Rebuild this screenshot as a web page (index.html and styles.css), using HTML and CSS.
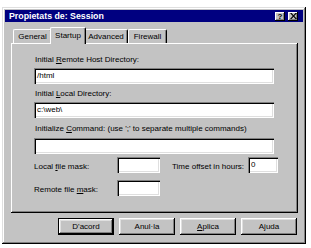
FILE: index.html
```html
<!DOCTYPE html>
<html>
<head>
<meta charset="utf-8">
<link rel="stylesheet" href="styles.css">
</head>
<body>
<div class="window">
  <div class="titlebar">
    <span class="title">Propietats de: Session</span>
    <div class="caption-buttons">
      <span class="cap-btn help">?</span>
      <span class="cap-btn close"><svg width="7" height="6" viewBox="0 0 7 6"><path d="M0 0h1.6L3.5 2.2 5.4 0H7L4.3 3 7 6H5.4L3.5 3.8 1.6 6H0l2.7-3z" fill="#000"/></svg></span>
    </div>
  </div>
  <div class="content">
    <div class="tabs">
      <div class="tab tab-general">General</div>
      <div class="tab tab-startup active">Startup</div>
      <div class="tab tab-advanced">Advanced</div>
      <div class="tab tab-firewall">Firewall</div>
    </div>
    <div class="panel">
      <div class="label">Initial <u>R</u>emote Host Directory:</div>
      <div class="input wide first">/html</div>
      <div class="label gap5">Initial <u>L</u>ocal Directory:</div>
      <div class="input wide first">c:\web\</div>
      <div class="label gap6">Initialize <u>C</u>ommand: (use ';' to separate multiple commands)</div>
      <div class="input wide second"></div>
      <div class="row row4">
        <span class="row-label">Local <u>f</u>ile mask:</span>
        <div class="input mask"></div>
        <span class="row-label time">Time offset in hours:</span>
        <div class="input offset">0</div>
      </div>
      <div class="row row5">
        <span class="row-label">Remote file <u>m</u>ask:</span>
        <div class="input mask"></div>
      </div>
    </div>
    <div class="buttons">
      <div class="btn default">D'acord</div>
      <div class="btn">Anul·la</div>
      <div class="btn"><u>A</u>plica</div>
      <div class="btn">Ajuda</div>
    </div>
  </div>
</div>
</body>
</html>
```
FILE: styles.css
```css
html, body {
  margin: 0;
  padding: 0;
  background: #ffffff;
}
body {
  font-family: "Liberation Sans", Arial, sans-serif;
  font-size: 8px;
  color: #000;
}
u { text-decoration: underline; text-underline-offset: 1px; }

.window {
  margin: 7px 0 0 2px;
  width: 304px;
  height: 237px;
  box-sizing: border-box;
  padding: 3px;
  background: #c3c3c3;
  box-shadow: inset -1px -1px #000, inset 1px 1px #dfdfdf, inset -2px -2px #808080, inset 2px 2px #fff;
  display: flex;
  flex-direction: column;
}

.titlebar {
  height: 12px;
  background: #000080;
  display: flex;
  align-items: center;
  justify-content: space-between;
  padding: 0 5px 0 4px;
}
.title {
  color: #fff;
  font-weight: bold;
  font-size: 8.8px;
  line-height: 12px;
}
.caption-buttons {
  display: flex;
  gap: 3px;
}
.cap-btn {
  width: 10px;
  height: 9px;
  background: #c3c3c3;
  box-shadow: inset -1px -1px #000, inset 1px 1px #fff, inset -2px -2px #808080;
  display: flex;
  align-items: center;
  justify-content: center;
  font-weight: bold;
  font-size: 8px;
  line-height: 9px;
}
.cap-btn svg { display: block; margin-top: -1px; }

.content {
  padding: 0 5px 0 6px;
  display: flex;
  flex-direction: column;
}

.tabs {
  margin-top: 5px;
  height: 16px;
  display: flex;
  align-items: flex-end;
  padding-left: 2px;
}
.tab {
  height: 14px;
  box-sizing: border-box;
  border-left: 1px solid #fff;
  border-top: 1px solid #fff;
  border-right: 1px solid #000;
  border-radius: 2px 2px 0 0;
  box-shadow: inset -1px 0 #808080;
  display: flex;
  align-items: center;
  justify-content: center;
  background: #c3c3c3;
}
.tab-general { width: 39px; }
.tab-startup { width: 32px; }
.tab-advanced { width: 44px; }
.tab-firewall { width: 39px; }
.tab.active {
  height: 17px;
  margin: 0 -2px -1px;
  width: 36px;
  position: relative;
  z-index: 1;
  padding-bottom: 2px;
}

.panel {
  height: 170px;
  box-sizing: border-box;
  padding: 12px 0 0 23px;
  box-shadow: inset -1px -1px #000, inset 1px 1px #fff, inset -2px -2px #808080;
  display: flex;
  flex-direction: column;
  align-items: flex-start;
}

.label {
  height: 10px;
  line-height: 10px;
  padding-left: 1px;
  white-space: nowrap;
}
.gap5 { margin-top: 5px; }
.gap6 { margin-top: 6px; }

.input {
  height: 16px;
  box-sizing: border-box;
  background: #fff;
  box-shadow: inset 1px 1px #808080, inset 2px 2px #000, inset -1px -1px #fff, inset -2px -2px #dfdfdf;
  padding: 0 3px;
  line-height: 16px;
  white-space: nowrap;
}
.input.wide { width: 240px; }
.input.first { margin-top: 3px; }
.input.second { margin-top: 4px; }
.input.mask { width: 43px; }
.input.offset { width: 30px; }

.row {
  display: flex;
  align-items: center;
}
.row4 { margin-top: 3px; }
.row5 { margin-top: 7px; }
.row-label {
  width: 83px;
  white-space: nowrap;
  padding-top: 2px;
}
.row-label.time {
  width: 76px;
  margin-left: 12px;
}

.buttons {
  margin-top: 5px;
  display: flex;
  justify-content: flex-end;
  gap: 5px;
  padding-right: 1px;
}
.btn {
  width: 56px;
  height: 17px;
  box-sizing: border-box;
  background: #c3c3c3;
  box-shadow: inset -1px -1px #000, inset 1px 1px #fff, inset -2px -2px #808080, inset 2px 2px #dfdfdf;
  display: flex;
  align-items: center;
  justify-content: center;
}
.btn.default {
  border: 1px solid #000;
}
```
